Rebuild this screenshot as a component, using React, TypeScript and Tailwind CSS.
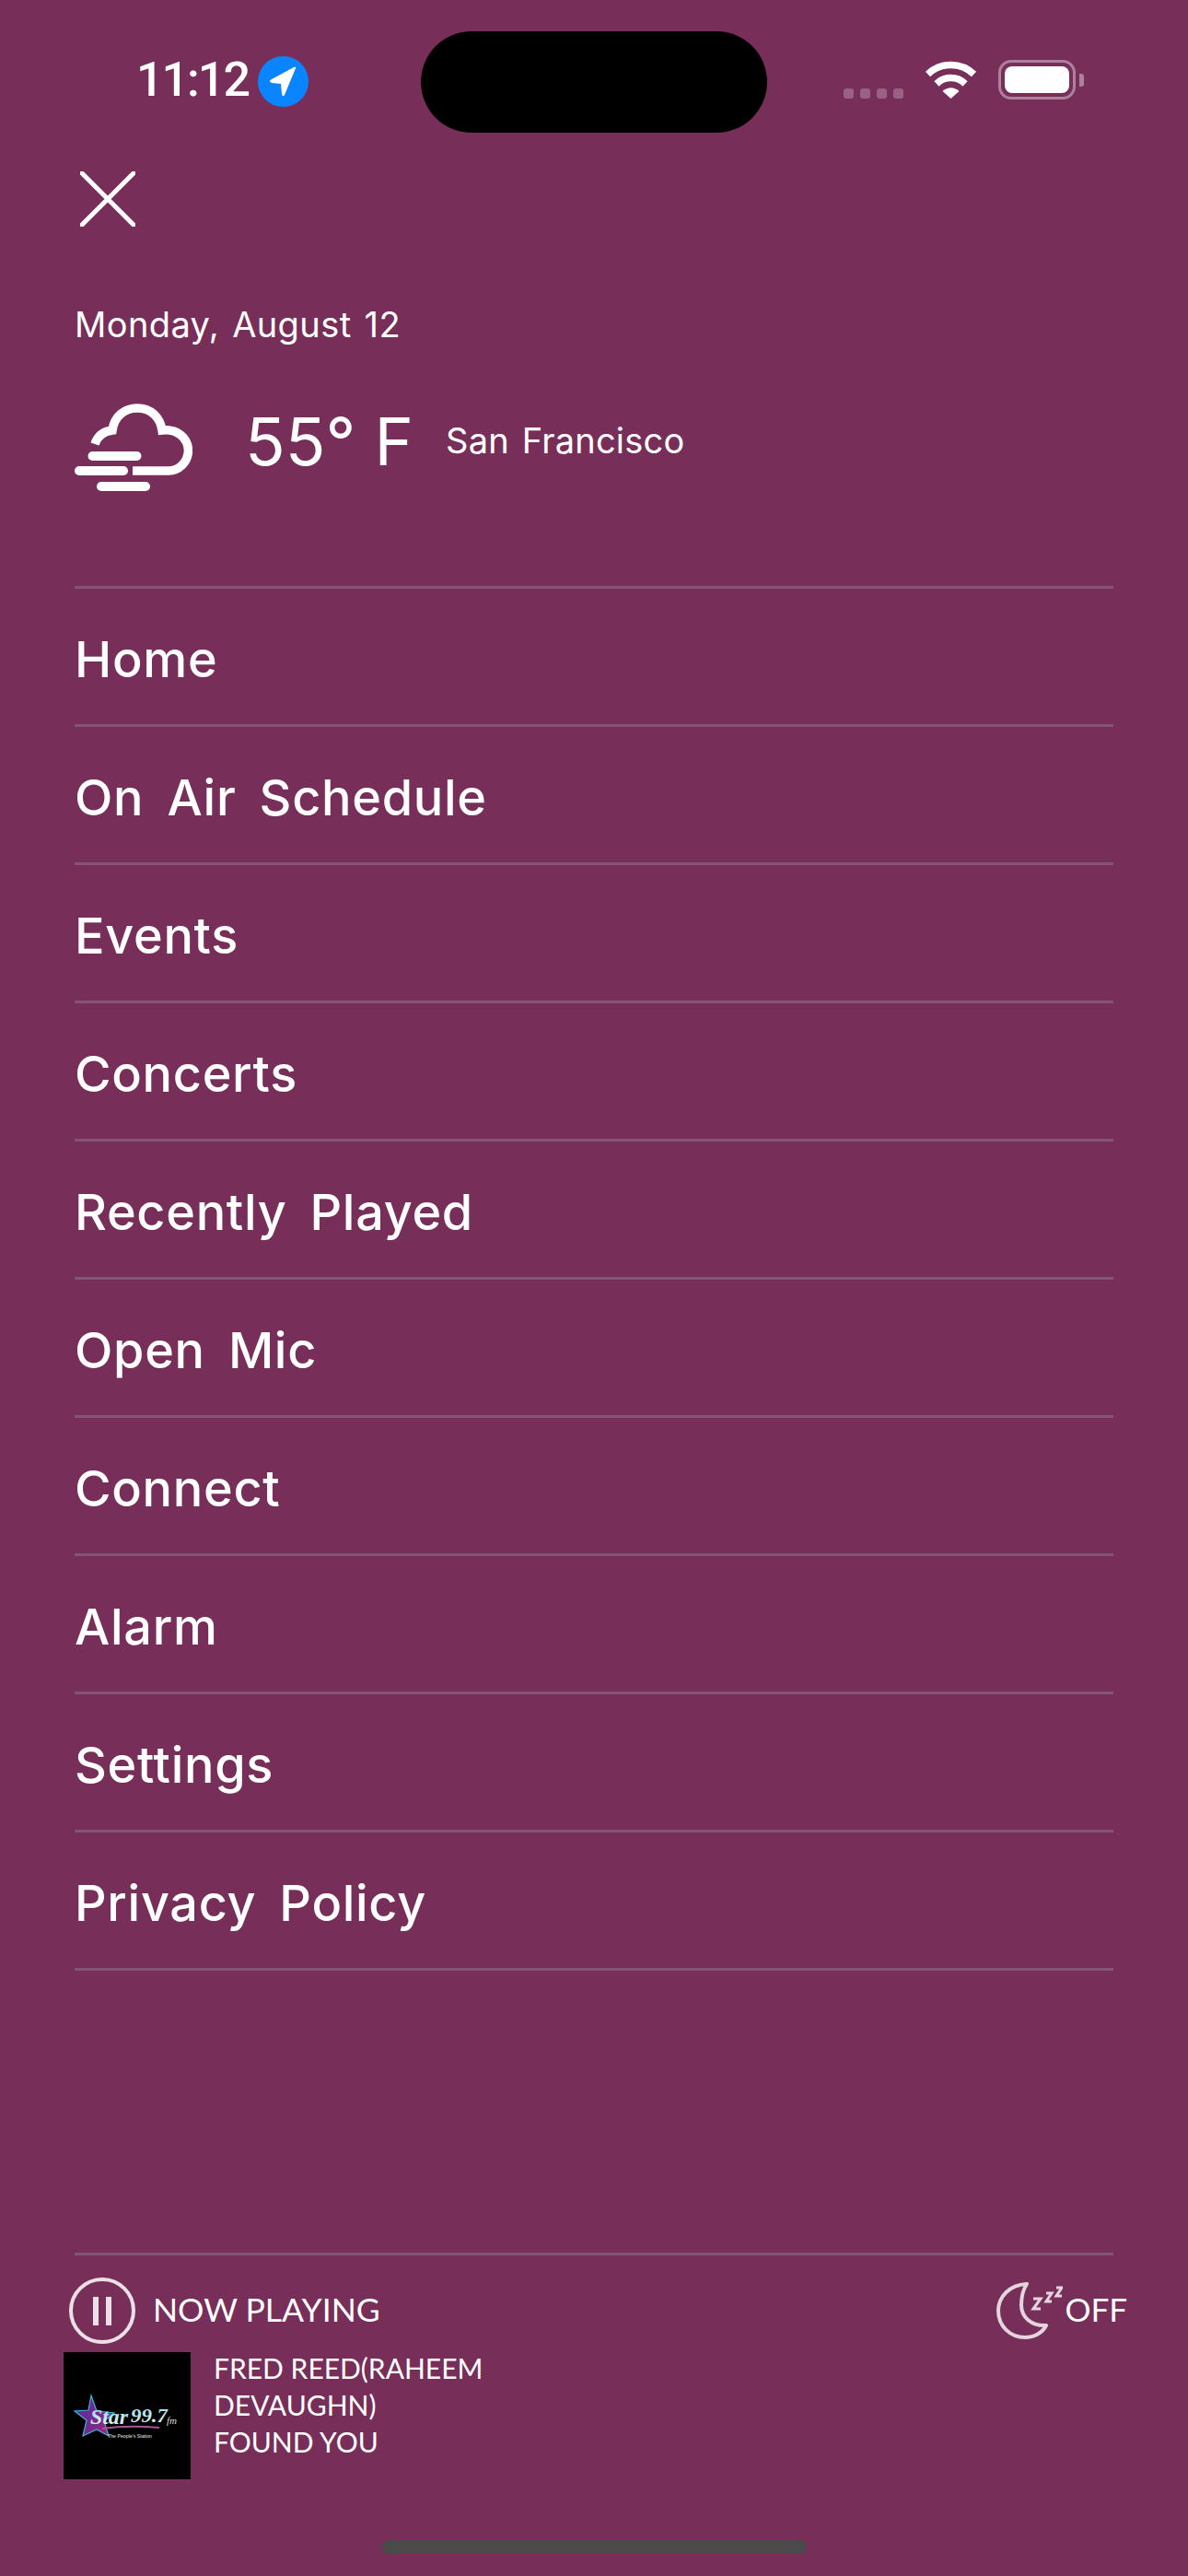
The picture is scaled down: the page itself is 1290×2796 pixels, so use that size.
const menuItems = ['Home', 'On Air Schedule', 'Events', 'Concerts', 'Recently Played', 'Open Mic', 'Connect', 'Alarm', 'Settings', 'Privacy Policy'];

const CloudIcon = () => (
  <svg width="128" height="95" viewBox="0 0 128 95" fill="none" className="shrink-0">
    <path d="M22 44C25 35 32 30 41 29C43 14 54 5 68 5C83 5 93 15 95 29C111 27 123 37 123.5 51C123 64 113 73 102 73L63 73" stroke="white" strokeWidth="9.5" />
    <rect x="14.5" y="52" width="58" height="10" rx="5" fill="white" />
    <rect x="0" y="68" width="58" height="10" rx="5" fill="white" />
    <rect x="24" y="85" width="58" height="10" rx="5" fill="white" />
  </svg>
);

const WifiIcon = () => (
  <svg width="57" height="42" viewBox="0 0 57 42" fill="none">
    <path d="M3.5 15.5A36 36 0 0 1 53.5 15.5" stroke="white" strokeWidth="7.5" />
    <path d="M13 26A22 22 0 0 1 44 26" stroke="white" strokeWidth="7.5" />
    <path d="M19.5 34Q28.5 26.5 37.5 34L28.5 42Z" fill="white" />
  </svg>
);

const StarLogo = () => (
  <svg width="138" height="138" viewBox="0 0 138 138" className="block">
    <defs>
      <linearGradient id="starFill" x1="0" y1="0" x2="1" y2="1">
        <stop offset="0" stopColor="#5b2a9c" />
        <stop offset="0.65" stopColor="#7b2a8c" />
        <stop offset="1" stopColor="#c2156a" />
      </linearGradient>
      <linearGradient id="letterFill" x1="0" y1="0" x2="0" y2="1">
        <stop offset="0" stopColor="#8fd6f5" />
        <stop offset="1" stopColor="#f2f6e6" />
      </linearGradient>
    </defs>
    <path d="M30 47L36 64L55 66L44 75L49 91L36 84L21 91L25 74L12 64L27 63Z" fill="url(#starFill)" stroke="#35b7d8" strokeWidth="1.2" />
    <text x="29" y="78" fontFamily="Liberation Serif" fontStyle="italic" fontWeight="700" fontSize="24" fill="url(#letterFill)" textLength="41" lengthAdjust="spacingAndGlyphs">Star</text>
    <text x="73" y="76" fontFamily="Liberation Serif" fontStyle="italic" fontWeight="700" fontSize="22" fill="url(#letterFill)" textLength="40" lengthAdjust="spacingAndGlyphs">99.7</text>
    <text x="112" y="78" fontFamily="Liberation Serif" fontStyle="italic" fontSize="11" fill="#dddddd">fm</text>
    <path d="M42 83Q70 79 104 82" stroke="#a5569a" strokeWidth="2" fill="none" />
    <text x="48" y="93" fontFamily="Liberation Sans" fontSize="5" fill="#e5e5e5" textLength="48" lengthAdjust="spacingAndGlyphs">The People's Station</text>
  </svg>
);

const MoonIcon = () => (
  <svg width="72" height="62" viewBox="0 0 72 62" fill="none" className="shrink-0 opacity-80">
    <path d="M33 2C14 3 2 16 2 31C2 48 15 60 31 60C41 60 50 55 54 47C38 48 27 38 27 25C27 15 29 8 33 2Z" stroke="white" strokeWidth="4" strokeLinejoin="round" />
    <path d="M40 18H48L40 29H48" stroke="white" strokeWidth="3" />
    <path d="M54 12H60L54 21H60" stroke="white" strokeWidth="3" />
    <path d="M65 6H71L65 15H71" stroke="white" strokeWidth="3" />
  </svg>
);

export default function App() {
  return (
    <div className="w-[1290px] h-[2796px] overflow-hidden flex flex-col bg-[#772e59] text-white font-['Inter',sans-serif]">
      {/* status bar */}
      <div className="flex h-[110px] mt-[34px] pl-[148px] shrink-0">
        <span className="w-[122px] mt-[23px] text-[52px] leading-[60px] font-medium tracking-[-2px] font-['Roboto',sans-serif]">11:12</span>
        <div className="w-[55px] h-[55px] mt-[27px] ml-[10px] rounded-full bg-[#0a84ff] flex items-center justify-center">
          <svg width="32" height="34" viewBox="0 0 32 34" fill="white">
            <path d="M29 2L17 31Q15 34 14 30L13 19L3 18Q-1 16 3 14L27 1Q30 0 29 2Z" />
          </svg>
        </div>
        <div className="w-[376px] h-[110px] ml-[122px] rounded-[55px] bg-black" />
        <div className="flex gap-[7px] mt-[62px] ml-[83px] h-[11px]">
          <div className="w-[11px] h-[11px] rounded-[3px] bg-white/25" />
          <div className="w-[11px] h-[11px] rounded-[3px] bg-white/25" />
          <div className="w-[11px] h-[11px] rounded-[3px] bg-white/25" />
          <div className="w-[11px] h-[11px] rounded-[3px] bg-white/25" />
        </div>
        <div className="mt-[31px] ml-[23px]">
          <WifiIcon />
        </div>
        <div className="mt-[31px] ml-[23px] flex items-center h-[43px]">
          <div className="w-[84px] h-[43px] rounded-[14px] border-[3px] border-white/40 p-[4px]">
            <div className="w-full h-full rounded-[8px] bg-white" />
          </div>
          <div className="w-[5px] h-[14px] ml-[4px] rounded-r-[3px] bg-white/40" />
        </div>
      </div>

      {/* close */}
      <div className="ml-[87px] mt-[42px]">
        <svg width="60" height="60" viewBox="0 0 60 60" fill="none" stroke="white" strokeWidth="5" strokeLinecap="round" className="block">
          <path d="M2 2L58 58M58 2L2 58" />
        </svg>
      </div>

      {/* date and weather */}
      <div className="ml-[81px] mt-[78px] text-[38px] leading-[56px] tracking-[0.4px] [word-spacing:3px]">Monday, August 12</div>
      <div className="flex items-start ml-[81px] mt-[58px] h-[95px]">
        <CloudIcon />
        <span className="ml-[57px] -mt-[7px] text-[72px] leading-[95px]">55° F</span>
        <span className="ml-[35px] mt-[12px] text-[38px] leading-[56px] tracking-[0.2px] [word-spacing:3px]">San Francisco</span>
      </div>

      {/* menu */}
      <nav className="mx-[81px] mt-[103px] border-t-[3px] border-[#845475]">
        {menuItems.map(item => (
          <div key={item} className="h-[150px] pt-[5px] border-b-[3px] border-[#845475] flex items-center text-[54px] font-[450] tracking-[0.7px] [word-spacing:10px]">
            {item}
          </div>
        ))}
      </nav>

      {/* now playing */}
      <div className="mx-[81px] mt-[306px] h-[3px] bg-[#845475] shrink-0" />
      <div className="flex items-center justify-between mt-[24px] ml-[75px] mr-[66px] h-[72px] font-['Lato',sans-serif]">
        <div className="flex items-center">
          <div className="w-[72px] h-[72px] rounded-full border-[4px] border-white/85 flex items-center justify-center gap-[8px]">
            <div className="w-[6px] h-[31px] bg-white/85" />
            <div className="w-[6px] h-[31px] bg-white/85" />
          </div>
          <span className="ml-[19px] -mt-[3px] text-[35.5px]">NOW PLAYING</span>
        </div>
        <div className="flex items-center">
          <MoonIcon />
          <span className="ml-[2px] -mt-[3px] text-[35px]">OFF</span>
        </div>
      </div>
      <div className="flex ml-[69px] mt-[9px] font-['Lato',sans-serif]">
        <div className="w-[138px] h-[138px] bg-black shrink-0">
          <StarLogo />
        </div>
        <div className="ml-[25px] w-[310px] -mt-[3px] text-[30px] leading-[40px]">
          <div>FRED REED(RAHEEM DEVAUGHN)</div>
          <div>FOUND YOU</div>
        </div>
      </div>

      {/* home indicator */}
      <div className="w-[462px] h-[15px] mt-[66px] ml-[414px] rounded-full bg-[#4a4a4a] shrink-0" />
    </div>
  );
}
